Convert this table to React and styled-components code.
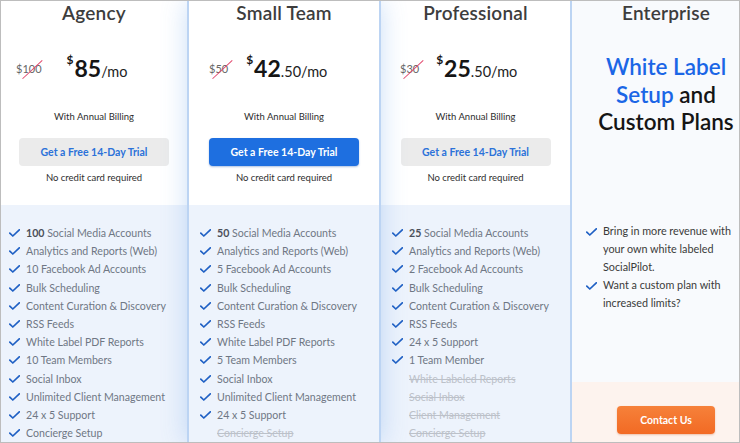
import React from 'react';
import styled, { createGlobalStyle, css } from 'styled-components';

const Global = createGlobalStyle`
  html, body { margin: 0; padding: 0; background: #fff; }
  body { font-family: Lato, "Noto Sans", sans-serif; -webkit-font-smoothing: antialiased; }
  * { box-sizing: border-box; }
`;

const Frame = styled.div`
  width: 740px;
  height: 443px;
  border: 1px solid #bdbdbd;
  overflow: hidden;
  display: grid;
  grid-template-columns: 186px 194px 189px 190px;
  background: #fff;
`;

const Column = styled.div`
  display: flex;
  flex-direction: column;
  min-height: 0;
  position: relative;
  ${p => p.$featured && css`
    border-left: 2px solid #bcd4f3;
    border-right: 2px solid #bcd4f3;
    z-index: 1;
    box-shadow: 0 0 24px rgba(80, 145, 230, 0.3);
  `}
`;

const EnterpriseColumn = styled.div`
  display: flex;
  flex-direction: column;
  min-height: 0;
  border-left: 2px solid #bcd4f3;
  background: #f8fafd;
`;

const Header = styled.div`
  height: 204px;
  flex-shrink: 0;
  background: #fff;
  display: flex;
  flex-direction: column;
  align-items: center;
`;

const Title = styled.h2`
  margin: 0;
  font-size: 19px;
  line-height: 24px;
  font-weight: 600;
  color: #3d3d3d;
  letter-spacing: 0.2px;
`;

const PriceRow = styled.div`
  align-self: stretch;
  display: flex;
  align-items: center;
  height: 30px;
  margin-top: 27px;
  padding-left: ${p => p.$pad}px;
  gap: ${p => p.$gap}px;
`;

const OldPrice = styled.span`
  position: relative;
  font-size: 11px;
  color: #666;
  margin-top: 3px;
  &::after {
    content: '';
    position: absolute;
    left: calc(50% - 10px);
    top: 50%;
    width: 27px;
    height: 1.3px;
    background: #e2466c;
    transform: rotate(-43deg);
  }
`;

const Price = styled.div`
  display: flex;
  align-items: flex-start;
  color: #151515;
`;

const Currency = styled.span`
  font-size: 12px;
  line-height: 1;
  font-weight: 700;
  margin-right: 1px;
`;

const Amount = styled.span`
  display: flex;
  align-items: baseline;
  line-height: 1;
`;

const Whole = styled.span`
  font-size: 23px;
  font-weight: 700;
  margin-top: 3px;
`;

const Rest = styled.span`
  font-size: 14.5px;
  color: #222;
`;

const Billing = styled.div`
  margin-top: 28px;
  font-size: 9.5px;
  line-height: 14px;
  color: #2e2e2e;
`;

const TrialButton = styled.button`
  margin-top: 14px;
  width: 150px;
  height: 28px;
  border: none;
  border-radius: 4px;
  font-family: inherit;
  font-size: 10.5px;
  font-weight: 700;
  cursor: pointer;
  background: ${p => (p.$primary ? '#1e6fe0' : '#ebebeb')};
  color: ${p => (p.$primary ? '#fff' : '#2b72d9')};
  box-shadow: ${p => (p.$primary ? '0 1px 2px rgba(20,80,170,0.35)' : 'none')};
`;

const Note = styled.div`
  margin-top: 5px;
  font-size: 9.5px;
  line-height: 14px;
  color: #2e2e2e;
`;

const Features = styled.ul`
  flex: 1;
  margin: 0;
  list-style: none;
  background: #edf3fc;
  padding: 19px 0 0 ${p => p.$pad}px;
  overflow: hidden;
`;

const Feature = styled.li`
  display: flex;
  align-items: center;
  height: 18.2px;
  font-size: 10.6px;
  white-space: nowrap;
  color: ${p => (p.$off ? '#bcc1c9' : '#6f7784')};
  text-decoration: ${p => (p.$off ? 'line-through' : 'none')};
  padding-left: ${p => (p.$off ? 17 : 0)}px;
  gap: 6px;
`;

const Strong = styled.b`
  color: #4b505a;
  font-weight: 700;
`;

const Check = () => (
  <svg width="11" height="8" viewBox="0 0 11 8" fill="none">
    <path d="M0.8 4.2 L3.8 7 L10.3 0.8" stroke="#1f60c4" strokeWidth="1.7" strokeLinecap="round" strokeLinejoin="round" />
  </svg>
);

const EntTop = styled.div`
  display: flex;
  flex-direction: column;
  align-items: center;
`;

const EntHeading = styled.h3`
  margin: 28px 0 0;
  font-size: 22.5px;
  line-height: 27.5px;
  font-weight: 600;
  color: #151515;
  text-align: center;
  width: 160px;
`;

const Accent = styled.span`
  color: #1b66e6;
`;

const EntList = styled.ul`
  margin: 86px 0 0;
  padding: 0 0 0 14px;
  list-style: none;
  display: flex;
  flex-direction: column;
`;

const EntItem = styled.li`
  display: flex;
  align-items: flex-start;
  gap: 6px;
  width: 157px;
  font-size: 10.8px;
  line-height: 18.2px;
  color: #3a3a3a;
  & > svg { flex-shrink: 0; margin-top: 6px; }
`;

const EntFooter = styled.div`
  margin-top: auto;
  height: 60px;
  background: #fdf3ee;
  display: flex;
  justify-content: center;
  padding-top: 24px;
`;

const ContactButton = styled.button`
  width: 98px;
  height: 28px;
  border: none;
  border-radius: 4px;
  background: linear-gradient(180deg, #f6813a 0%, #f26a24 100%);
  color: #fff;
  font-family: inherit;
  font-size: 10.5px;
  font-weight: 700;
  box-shadow: 0 1px 2px rgba(200, 80, 20, 0.3);
  cursor: pointer;
`;

const plans = [
  {
    name: 'Agency', old: '$100', whole: '85', cents: '', pad: 15, gap: 25, listPad: 8,
    count: '100',
    features: ['Analytics and Reports (Web)', '10 Facebook Ad Accounts', 'Bulk Scheduling', 'Content Curation & Discovery', 'RSS Feeds', 'White Label PDF Reports', '10 Team Members', 'Social Inbox', 'Unlimited Client Management', '24 x 5 Support', 'Concierge Setup'],
    off: [],
  },
  {
    name: 'Small Team', old: '$50', whole: '42', cents: '.50', pad: 20, gap: 18, listPad: 11, featured: true,
    count: '50',
    features: ['Analytics and Reports (Web)', '5 Facebook Ad Accounts', 'Bulk Scheduling', 'Content Curation & Discovery', 'RSS Feeds', 'White Label PDF Reports', '5 Team Members', 'Social Inbox', 'Unlimited Client Management', '24 x 5 Support'],
    off: ['Concierge Setup'],
  },
  {
    name: 'Professional', old: '$30', whole: '25', cents: '.50', pad: 19, gap: 17, listPad: 11,
    count: '25',
    features: ['Analytics and Reports (Web)', '2 Facebook Ad Accounts', 'Bulk Scheduling', 'Content Curation & Discovery', 'RSS Feeds', '24 x 5 Support', '1 Team Member'],
    off: ['White Labeled Reports', 'Social Inbox', 'Client Management', 'Concierge Setup'],
  },
];

function PlanColumn({ plan }) {
  return (
    <Column $featured={plan.featured}>
      <Header>
        <Title>{plan.name}</Title>
        <PriceRow $pad={plan.pad} $gap={plan.gap}>
          <OldPrice>{plan.old}</OldPrice>
          <Price>
            <Currency>$</Currency>
            <Amount>
              <Whole>{plan.whole}</Whole>
              <Rest>{plan.cents}/mo</Rest>
            </Amount>
          </Price>
        </PriceRow>
        <Billing>With Annual Billing</Billing>
        <TrialButton $primary={plan.featured}>Get a Free 14-Day Trial</TrialButton>
        <Note>No credit card required</Note>
      </Header>
      <Features $pad={plan.listPad}>
        <Feature>
          <Check />
          <span><Strong>{plan.count}</Strong> Social Media Accounts</span>
        </Feature>
        {plan.features.map(f => (
          <Feature key={f}>
            <Check />
            <span>{f}</span>
          </Feature>
        ))}
        {plan.off.map(f => (
          <Feature key={f} $off>
            <span>{f}</span>
          </Feature>
        ))}
      </Features>
    </Column>
  );
}

export default function App() {
  return (
    <>
      <Global />
      <Frame>
        {plans.map(p => <PlanColumn key={p.name} plan={p} />)}
        <EnterpriseColumn>
          <EntTop>
            <Title>Enterprise</Title>
            <EntHeading>
              <Accent>White Label Setup</Accent> and Custom Plans
            </EntHeading>
          </EntTop>
          <EntList>
            <EntItem>
              <Check />
              <span>Bring in more revenue with your own white labeled SocialPilot.</span>
            </EntItem>
            <EntItem>
              <Check />
              <span>Want a custom plan with increased limits?</span>
            </EntItem>
          </EntList>
          <EntFooter>
            <ContactButton>Contact Us</ContactButton>
          </EntFooter>
        </EnterpriseColumn>
      </Frame>
    </>
  );
}
